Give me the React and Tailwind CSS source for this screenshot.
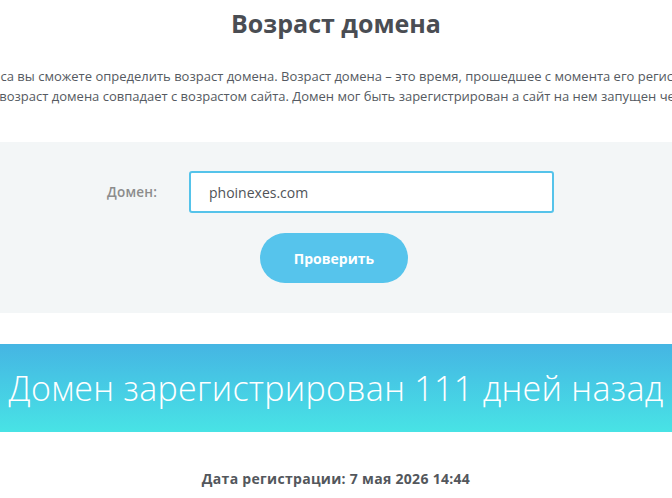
import React from "react";

const font = { fontFamily: '"Open Sans", "Noto Sans", sans-serif' };

export default function App() {
  return (
    <div className="w-full overflow-hidden bg-white" style={font}>
      {/* Heading */}
      <h1 className="pt-[6px] h-[40px] text-center text-[25px] font-bold leading-[34px] text-[#4a4d53]">
        Возраст домена
      </h1>

      {/* Intro text, wider than the window */}
      <div className="mt-[26px] flex flex-col items-center text-[13px] leading-[20px] text-[#555a61]">
        <div className="flex w-full justify-center">
          <span className="whitespace-nowrap">
            ервиса вы сможете определить возраст домена. Возраст домена – это время, прошедшее с момента его регистрац
          </span>
        </div>
        <div className="flex w-full justify-center">
          <span className="whitespace-nowrap">
            гда возраст домена совпадает с возрастом сайта. Домен мог быть зарегистрирован а сайт на нем запущен через
          </span>
        </div>
      </div>

      {/* Form panel */}
      <div className="mt-[36px] bg-[#f3f6f7] pt-[29px] pb-[30px]">
        <div className="flex items-center pl-[107px]">
          <label className="w-[82px] text-[13.5px] font-semibold tracking-[0.2px] text-[#8c8c8c]">Домен:</label>
          <div className="flex h-[42px] w-[365px] items-center rounded-[3px] border-2 border-[#55c3ea] bg-white pl-[18px] text-[14px] text-[#4f5358]">
            phoinexes.com
          </div>
        </div>
        <div className="mt-[20px] flex justify-center pr-[4px]">
          <button className="h-[50px] w-[148px] rounded-full bg-[#56c4ec] text-[14px] font-bold text-white">
            Проверить
          </button>
        </div>
      </div>

      {/* Result banner */}
      <div className="mt-[31px] flex h-[88px] items-center justify-center bg-gradient-to-b from-[#45b5e3] to-[#48e3e5]">
        <span className="whitespace-nowrap text-[34px] font-light tracking-[0.3px] text-white">
          Домен зарегистрирован 111 дней назад
        </span>
      </div>

      <div className="mt-[36px] text-center text-[14px] font-bold tracking-[0.3px] text-[#53575c]">
        Дата регистрации: 7 мая 2026 14:44
      </div>
      <div className="h-[20px]" />
    </div>
  );
}
